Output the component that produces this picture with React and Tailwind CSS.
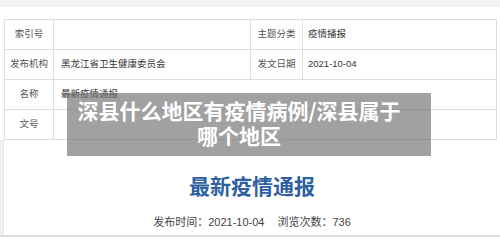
const rows = [
  { label: "索引号", value: "", label2: "主题分类", value2: "疫情播报" },
  { label: "发布机构", value: "黑龙江省卫生健康委员会", label2: "发文日期", value2: "2021-10-04" },
];

export default function App() {
  return (
    <div className="relative w-[500px] h-[250px] overflow-hidden bg-white font-['Liberation_Sans','Noto_Sans_CJK_SC',sans-serif]">
      <div className="h-[7px] bg-[#f2f2f2]" />

      {/* info table */}
      <div className="pt-[12px] pl-[4px] pr-[3px]">
        <table className="w-full border-collapse text-[9.5px] table-fixed">
          <colgroup>
            <col className="w-[49px]" />
            <col className="w-[197px]" />
            <col className="w-[52px]" />
            <col />
          </colgroup>
          <tbody>
            {rows.map((r) => (
              <tr key={r.label} className="h-[30px]">
                <td className="border border-[#dedede] text-center text-[#555]">{r.label}</td>
                <td className="border border-[#dedede] pl-[7px] text-[#333]">{r.value}</td>
                <td className="border border-[#dedede] text-center text-[#555]">{r.label2}</td>
                <td className="border border-[#dedede] pl-[5px] text-[#333]">{r.value2}</td>
              </tr>
            ))}
            <tr className="h-[30px]">
              <td className="border border-[#dedede] text-center text-[#555]">名称</td>
              <td colSpan={3} className="border border-[#dedede] pl-[7px] text-[#333]">
                最新疫情通报
              </td>
            </tr>
            <tr className="h-[30px]">
              <td className="border border-[#dedede] text-center text-[#555]">文号</td>
              <td colSpan={3} className="border border-[#dedede]" />
            </tr>
          </tbody>
        </table>
      </div>

      {/* article header */}
      <div className="flex h-[95px]">
        <div className="w-[3px] bg-[#f1f1f1]" />
        <div className="flex-1 border-l border-[#e6e6e6] flex flex-col items-center pt-[31px]">
          <h1 className="text-[21px] leading-[28px] font-bold text-[#2f5fa3] font-['Noto_Sans_CJK_SC',sans-serif]">
            最新疫情通报
          </h1>
          <div className="mt-[15px] text-[11px] leading-[16px] text-[#444] flex gap-[13px]">
            <span>发布时间：2021-10-04</span>
            <span>浏览次数：736</span>
          </div>
        </div>
      </div>
      <div className="border-t-2 border-[#dcdcdc]" />

      {/* title overlay */}
      <div className="absolute left-[67px] top-[93px] w-[364px] h-[63px] bg-[rgba(110,110,110,0.65)] pl-[9px] pr-[29px] pt-[5px] text-center text-white font-bold text-[21px] leading-[25px] font-['Noto_Sans_CJK_SC',sans-serif]">
        深县什么地区有疫情病例/深县属于
        <br />
        哪个地区
      </div>
    </div>
  );
}
